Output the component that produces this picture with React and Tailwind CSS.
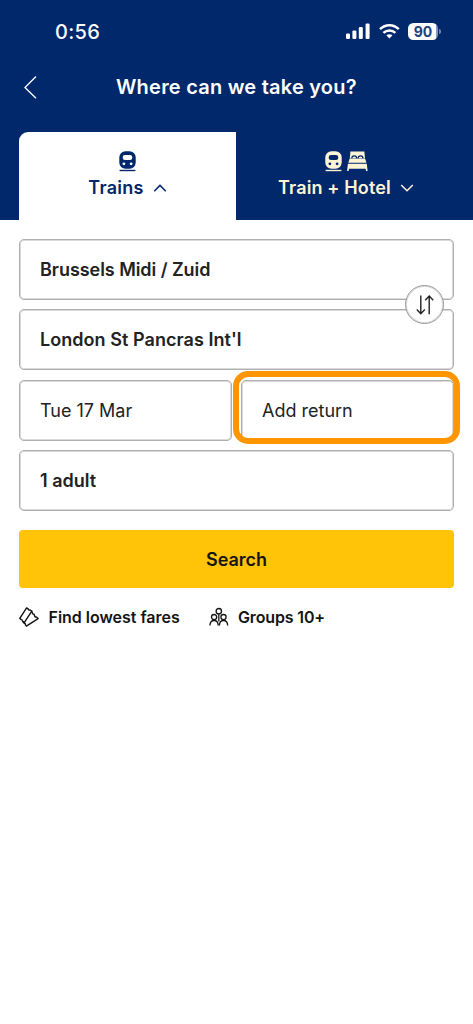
import React from "react";

function TrainIcon({ holes }) {
  return (
    <svg width="17" height="21" viewBox="0 0 17 21" fill="currentColor">
      <rect x="0.3" y="0.2" width="16.4" height="17.6" rx="6.2" />
      <rect x="3.7" y="4.1" width="9.6" height="5" rx="2.3" fill={holes} />
      <circle cx="4.9" cy="12.8" r="1.4" fill={holes} />
      <circle cx="12.1" cy="12.8" r="1.4" fill={holes} />
      <rect x="0.6" y="18.8" width="15.8" height="1.4" />
    </svg>
  );
}

function BedIcon() {
  return (
    <svg width="21" height="21" viewBox="0 0 21 21" fill="currentColor">
      <path d="M3.4 0.5H17.4L18 7.4H2.8Z" />
      <g fill="none" stroke="#00286a" strokeWidth="1.2">
        <path d="M4.8 7.4C4.8 4 9.7 4 9.7 7.4M11.1 7.4C11.1 4 16 4 16 7.4" />
      </g>
      <path d="M2.6 7.8H18.2L19.4 11.8H1.3Z" />
      <path d="M0.9 12.8H19.8L20.6 20H19L18.7 17.8H2L1.7 20H0.1Z" />
    </svg>
  );
}

function StatusBar() {
  return (
    <div className="flex h-[63px] items-center justify-between pl-[55px] pr-[32px]">
      <span className="text-[20px] font-medium leading-6 tracking-[0.3px]">0:56</span>
      <div className="flex items-center">
        <svg width="25" height="17" viewBox="0 0 25 17" fill="white">
          <rect x="0" y="10.4" width="4" height="5.6" rx="1.2" />
          <rect x="6.4" y="7.4" width="4" height="8.6" rx="1.2" />
          <rect x="12.8" y="4" width="4" height="12" rx="1.2" />
          <rect x="19.6" y="0.6" width="4" height="15.4" rx="1.2" />
        </svg>
        <svg className="ml-2" width="21" height="17" viewBox="0 0 21 17" fill="none" stroke="white" strokeWidth="2.5">
          <path d="M1 6.2C6.4 1 14.4 1 19.8 6.2" />
          <path d="M4.4 9.8C7.9 6.6 12.9 6.6 16.4 9.8" />
          <path d="M7.3 12.3C9.2 10.8 11.6 10.8 13.5 12.3L10.4 15.6Z" fill="white" stroke="none" />
        </svg>
        <span className="ml-2 flex h-[17px] w-[30px] items-center justify-center rounded-[5.5px] bg-[linear-gradient(90deg,#fff_92%,#8497b8_92%)] text-[14px] font-bold leading-[17px] text-[#21437c]">90</span>
        <span className="ml-px h-[5px] w-[2px] rounded-r-full bg-[#6f86ad]" />
      </div>
    </div>
  );
}

function Chevron({ up }) {
  return (
    <svg width="14" height="10" viewBox="0 0 14 10" fill="none" stroke="currentColor" strokeWidth="1.5">
      <path d={up ? "M1.2 8.2L7 2.4L12.8 8.2" : "M1.2 2L7 7.8L12.8 2"} />
    </svg>
  );
}

function Field({ children, className }) {
  return (
    <div className={"flex h-[61px] items-center rounded-[5px] border border-[#aeaeae] bg-white pl-[20px] text-[#222] shadow-[inset_0_0_0_1px_#dadada] " + className}>
      {children}
    </div>
  );
}

export default function App() {
  return (
    <div className="min-h-[1024px] w-[473px] bg-white font-['Inter',sans-serif]">
      <header className="flex h-[219.5px] flex-col bg-[#00286a] text-white">
        <StatusBar />
        <div className="flex h-[69px] items-start pl-[24px] pt-[12px]">
          <svg width="14" height="24" viewBox="0 0 14 24" fill="none" stroke="white" strokeWidth="1.3">
            <path d="M12 1.5L1 12.5L12 23.3" />
          </svg>
          <h1 className="ml-[78px] whitespace-nowrap text-[20px] font-semibold leading-6 tracking-[0.22px]">Where can we take you?</h1>
        </div>
        <div className="flex flex-1 pl-[19px]">
          <div className="flex w-[217px] flex-col items-center rounded-tl-[9px] bg-white pt-[19px] text-[#00286a]">
            <TrainIcon holes="white" />
            <div className="mt-[3.5px] flex items-center gap-[9px] text-[18px] font-semibold leading-6 tracking-[0.25px]">
              <span>Trains</span>
              <Chevron up />
            </div>
          </div>
          <div className="flex flex-1 flex-col pt-[19px] text-[#fff4d6]">
            <div className="flex gap-[5px] pl-[89px]">
              <TrainIcon holes="#00286a" />
              <BedIcon />
            </div>
            <div className="mt-[3.5px] flex items-center gap-[9px] whitespace-nowrap pl-[42px] text-[18px] font-semibold leading-6 tracking-[0.15px]">
              <span>Train + Hotel</span>
              <Chevron />
            </div>
          </div>
        </div>
      </header>

      <main className="px-[19px] pt-[19.5px]">
        <div className="relative flex flex-col gap-[9.3px]">
          <Field className="text-[18px] font-semibold tracking-[-0.05px]">Brussels Midi / Zuid</Field>
          <Field className="text-[18px] font-semibold tracking-[0.05px]">London St Pancras Int'l</Field>
          <button className="absolute right-[10px] top-[46px] flex size-[39px] items-center justify-center rounded-full border border-[#999] bg-white text-[#222] shadow-[inset_0_0_0_1px_#dadada]">
            <svg width="18" height="20" viewBox="0 0 18 20" fill="none" stroke="currentColor" strokeWidth="1.4">
              <path d="M4.8 0.5V18.5M0.8 14.6L4.8 18.8L8.8 14.6M13.2 19.2V1.2M9.2 5.2L13.2 1L17.2 5.2" />
            </svg>
          </button>
          <div className="grid grid-cols-2 gap-[9px]">
            <Field className="text-[18px]">Tue 17 Mar</Field>
            <div className="relative">
              <Field className="text-[18px]">Add return</Field>
              <div className="absolute -left-[8px] -right-[6px] -top-[9px] h-[73px] rounded-[15px] border-[6px] border-[#ff9500]" />
            </div>
          </div>
          <Field className="text-[18px] font-semibold">1 adult</Field>
        </div>
        <button className="mt-[19px] flex h-[58.5px] w-full items-center justify-center rounded-[4px] bg-[#ffc307] text-[18px] font-semibold text-[#141414]">
          Search
        </button>
        <div className="mt-[18.5px] flex h-5 items-center whitespace-nowrap text-[16px] font-semibold leading-5 text-[#141414]">
          <svg width="20" height="20" viewBox="0 0 20 20" fill="none" stroke="currentColor" strokeWidth="1.4" strokeLinejoin="round">
            <path d="M7.6 0.9L9.2 1.9Q9.4 3.3 11 3L12.8 4.2L5.4 15.4L3.6 14.4Q3.7 12.9 2.3 12.6L0.8 11.4Z" />
            <path d="M12.8 4.2L13.4 6.2Q13.6 7.4 15.1 7.3L15.6 9Q16 10.3 17.4 9.9L19.1 11.6L7.4 19.1L6.4 17.9Q6.7 16.4 5.2 16.3L3.6 14.4" />
          </svg>
          <span className="ml-[9.5px] w-[132px] tracking-[-0.02px]">Find lowest fares</span>
          <svg className="ml-[28px]" width="20" height="20" viewBox="0 0 20 20" fill="none" stroke="currentColor" strokeWidth="1.3">
            <circle cx="9.8" cy="4.2" r="2.7" />
            <circle cx="5.1" cy="10.1" r="2.6" />
            <circle cx="14.5" cy="10.1" r="2.6" />
            <path d="M0.9 18.5C1.2 11.8 9 11.8 9.2 18.5M10.4 18.5C10.6 11.8 18.4 11.8 18.7 18.5M9.8 7V14.5" />
          </svg>
          <span className="ml-[9.5px] tracking-[-0.15px]">Groups 10+</span>
        </div>
      </main>
    </div>
  );
}
